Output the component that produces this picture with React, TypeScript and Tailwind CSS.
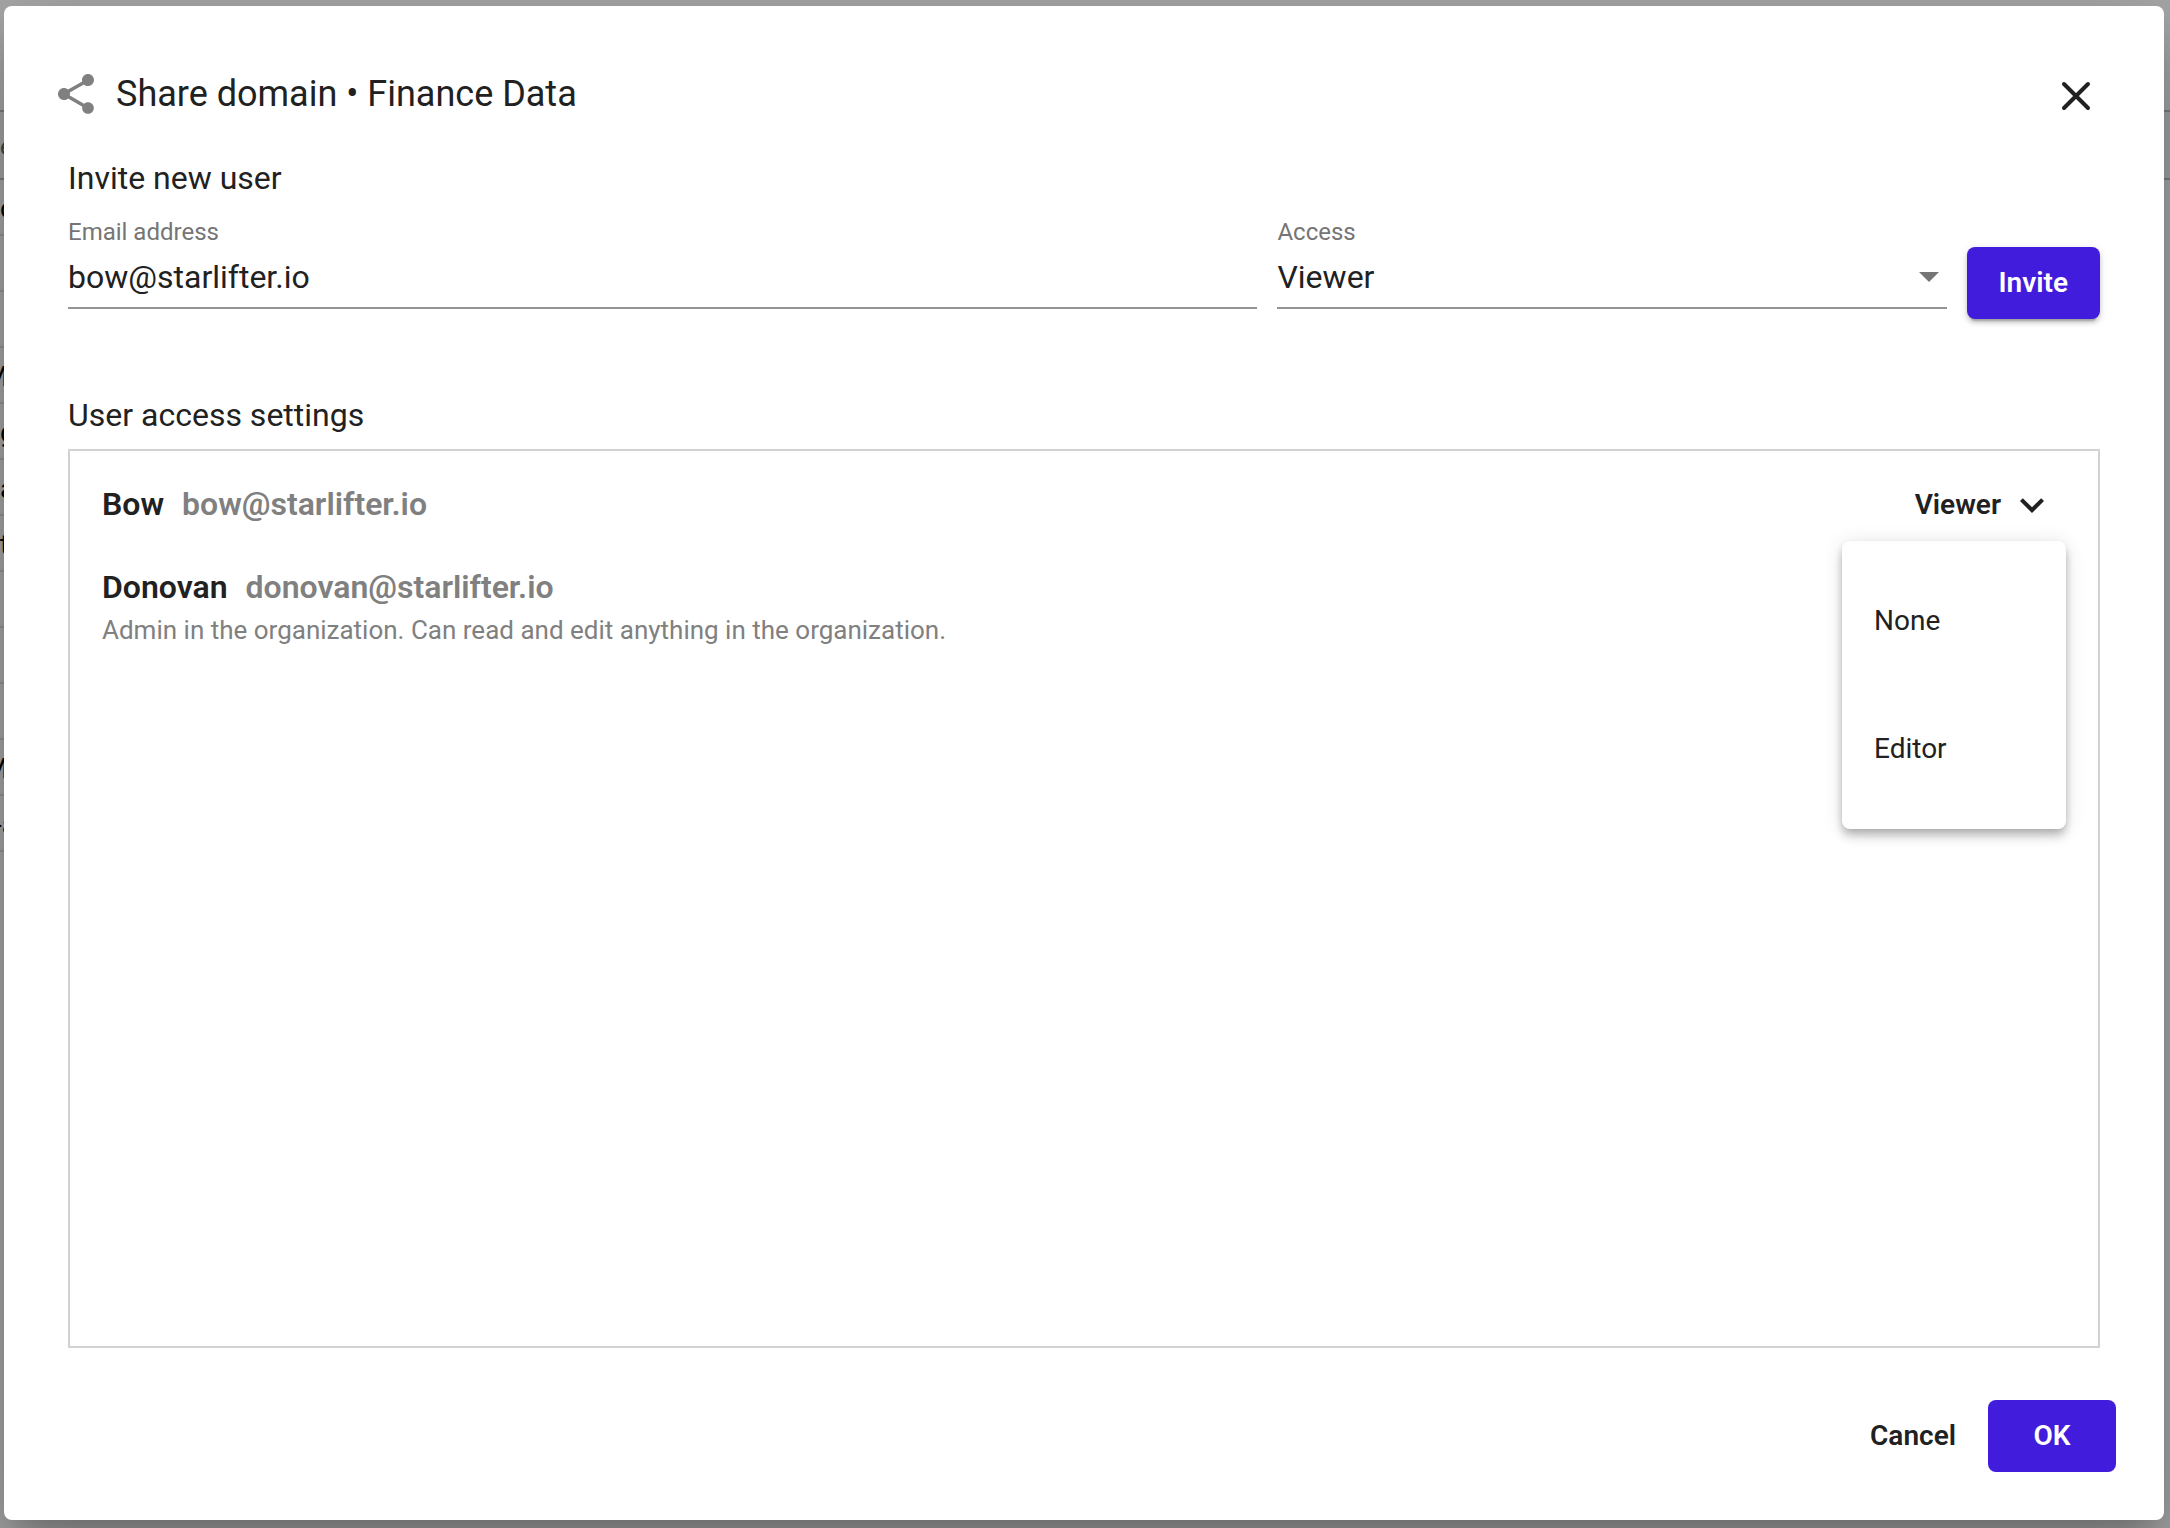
import { useState } from "react";

const backgroundRows = ["c", "", "", "M", "g", "a", "t", "", "", "", "M", "-a"];

const rowShift: Record<string, string> = {
  M: "-ml-4",
  "-a": "-ml-[6px]",
};

function ShareIcon() {
  return (
    <svg viewBox="0 0 24 24" className="size-12 shrink-0 fill-[#808080]" aria-hidden="true">
      <path d="M18 16.08c-.76 0-1.44.3-1.96.77L8.91 12.7c.05-.23.09-.46.09-.7s-.04-.47-.09-.7l7.05-4.11c.54.5 1.25.81 2.04.81 1.66 0 3-1.34 3-3s-1.34-3-3-3-3 1.34-3 3c0 .24.04.47.09.7L8.04 9.81C7.5 9.31 6.79 9 6 9c-1.66 0-3 1.34-3 3s1.34 3 3 3c.79 0 1.5-.31 2.04-.81l7.12 4.16c-.05.21-.08.43-.08.65 0 1.61 1.31 2.92 2.92 2.92s2.92-1.31 2.92-2.92-1.31-2.92-2.92-2.92z" />
    </svg>
  );
}

function CloseIcon() {
  return (
    <svg viewBox="0 0 48 48" className="size-12" fill="none" stroke="#212121" strokeWidth="4" strokeLinecap="round" aria-hidden="true">
      <path d="M12 12 36 36M36 12 12 36" />
    </svg>
  );
}

function ChevronIcon() {
  return (
    <svg viewBox="0 0 24 24" className="size-12 fill-[#212121]" aria-hidden="true">
      <path d="M7.41 8.59 12 13.17l4.59-4.58L18 10l-6 6-6-6z" />
    </svg>
  );
}

function Backdrop() {
  return (
    <div className="absolute inset-0 overflow-hidden bg-[#a8a8a8] text-[28px] text-black" aria-hidden="true">
      <div className="h-[110px]" />
      <div className="flex h-[70px] items-center border-y-2 border-[#7e7f83] bg-[#a3a6a5] pt-1 text-[24px] text-[#444444]">e</div>
      <div className="w-1/2">
        {backgroundRows.map((text, i) => (
          <div key={i} className="flex h-14 items-center border-b-2 border-[#949695] pt-1">
            <span className={rowShift[text]}>{text}</span>
          </div>
        ))}
      </div>
    </div>
  );
}

export default function App() {
  const [email, setEmail] = useState("bow@starlifter.io");
  const [access, setAccess] = useState("Viewer");

  return (
    <div className="relative flex min-h-screen pt-[6px] pr-[6px] pb-2 pl-1 font-['Roboto',sans-serif] text-[#212121]">
      <Backdrop />
      <div
        role="dialog"
        aria-modal="true"
        aria-labelledby="share-title"
        className="relative flex flex-1 flex-col rounded-lg bg-white px-12 pt-14 pb-12 shadow-[0_22px_30px_-14px_rgba(0,0,0,0.2),0_48px_76px_6px_rgba(0,0,0,0.14),0_18px_92px_16px_rgba(0,0,0,0.12)]"
      >
        <header className="flex items-start justify-between">
          <div className="flex h-16 items-center gap-4">
            <ShareIcon />
            <h1 id="share-title" className="text-[36px] leading-12">Share domain • Finance Data</h1>
          </div>
          <button type="button" aria-label="Close" className="flex h-[68px] w-20 items-center justify-center">
            <CloseIcon />
          </button>
        </header>

        <main className="flex flex-1 flex-col px-4">
          <h2 className="mt-6 text-[32px] leading-12">Invite new user</h2>
          <form className="mt-[14px] flex items-end gap-5" onSubmit={(e) => e.preventDefault()}>
            <div className="flex min-w-0 flex-[16] flex-col pb-[10px]">
              <label htmlFor="email" className="text-[24px] leading-8 text-[#757575]">Email address</label>
              <input
                id="email"
                type="email"
                value={email}
                onChange={(e) => setEmail(e.target.value)}
                className="mt-[9px] h-[52px] border-b-2 border-[#949494] pb-[10px] text-[32px] leading-10 outline-none"
              />
            </div>
            <div className="flex min-w-0 flex-[9] flex-col pb-[10px]">
              <label htmlFor="access" className="text-[24px] leading-8 text-[#757575]">Access</label>
              <div className="relative mt-[9px] flex">
                <select
                  id="access"
                  value={access}
                  onChange={(e) => setAccess(e.target.value)}
                  className="h-[52px] w-full appearance-none border-b-2 border-[#949494] pb-[10px] text-[32px] leading-10 outline-none"
                >
                  <option>Viewer</option>
                  <option>Editor</option>
                </select>
                <svg viewBox="0 0 20 10" className="pointer-events-none absolute top-[15px] right-2 h-[10px] w-5 fill-[#757575]" aria-hidden="true">
                  <path d="M0 0h20L10 10z" />
                </svg>
              </div>
            </div>
            <button type="submit" className="h-[72px] rounded-lg bg-[#421cdc] px-8 text-[28px] font-semibold text-white shadow-[0_6px_2px_-4px_rgba(0,0,0,0.2),0_4px_4px_rgba(0,0,0,0.14),0_2px_10px_rgba(0,0,0,0.12)]">
              Invite
            </button>
          </form>

          <h2 className="mt-[72px] text-[32px] leading-12">User access settings</h2>
          <ul className="mt-[10px] flex-1 border-2 border-[#d2d2d2] px-8 pt-[18px]">
            <li className="relative flex h-[72px] items-center justify-between">
              <div className="flex gap-[18px] pb-[2px] text-[32px] leading-10">
                <span className="font-semibold">Bow</span>
                <span className="font-semibold text-[#808080]">bow@starlifter.io</span>
              </div>
              <button type="button" aria-haspopup="menu" aria-expanded="true" className="flex h-[72px] items-center gap-[7px] pr-[10px] text-[28px] font-semibold">
                Viewer
                <ChevronIcon />
              </button>
              <div role="menu" className="absolute top-full right-0 z-10 flex w-56 flex-col rounded-lg bg-white py-4 shadow-[0_4px_8px_-2px_rgba(0,0,0,0.2),0_8px_10px_rgba(0,0,0,0.14),0_2px_20px_rgba(0,0,0,0.12)]">
                <button type="button" role="menuitem" className="h-32 px-8 text-left text-[28px]">None</button>
                <button type="button" role="menuitem" className="h-32 px-8 text-left text-[28px]">Editor</button>
              </div>
            </li>
            <li className="mt-[26px]">
              <div className="flex gap-[18px] text-[32px] leading-10">
                <span className="font-semibold">Donovan</span>
                <span className="font-semibold text-[#808080]">donovan@starlifter.io</span>
              </div>
              <p className="mt-[5px] text-[26px] leading-9 text-[#808080]">
                Admin in the organization. Can read and edit anything in the organization.
              </p>
            </li>
          </ul>
        </main>

        <footer className="mt-[52px] flex justify-end">
          <button type="button" className="h-[72px] px-8 text-[28px] font-semibold">Cancel</button>
          <button type="button" className="h-[72px] w-32 rounded-lg bg-[#421cdc] text-[28px] font-semibold text-white">OK</button>
        </footer>
      </div>
    </div>
  );
}
